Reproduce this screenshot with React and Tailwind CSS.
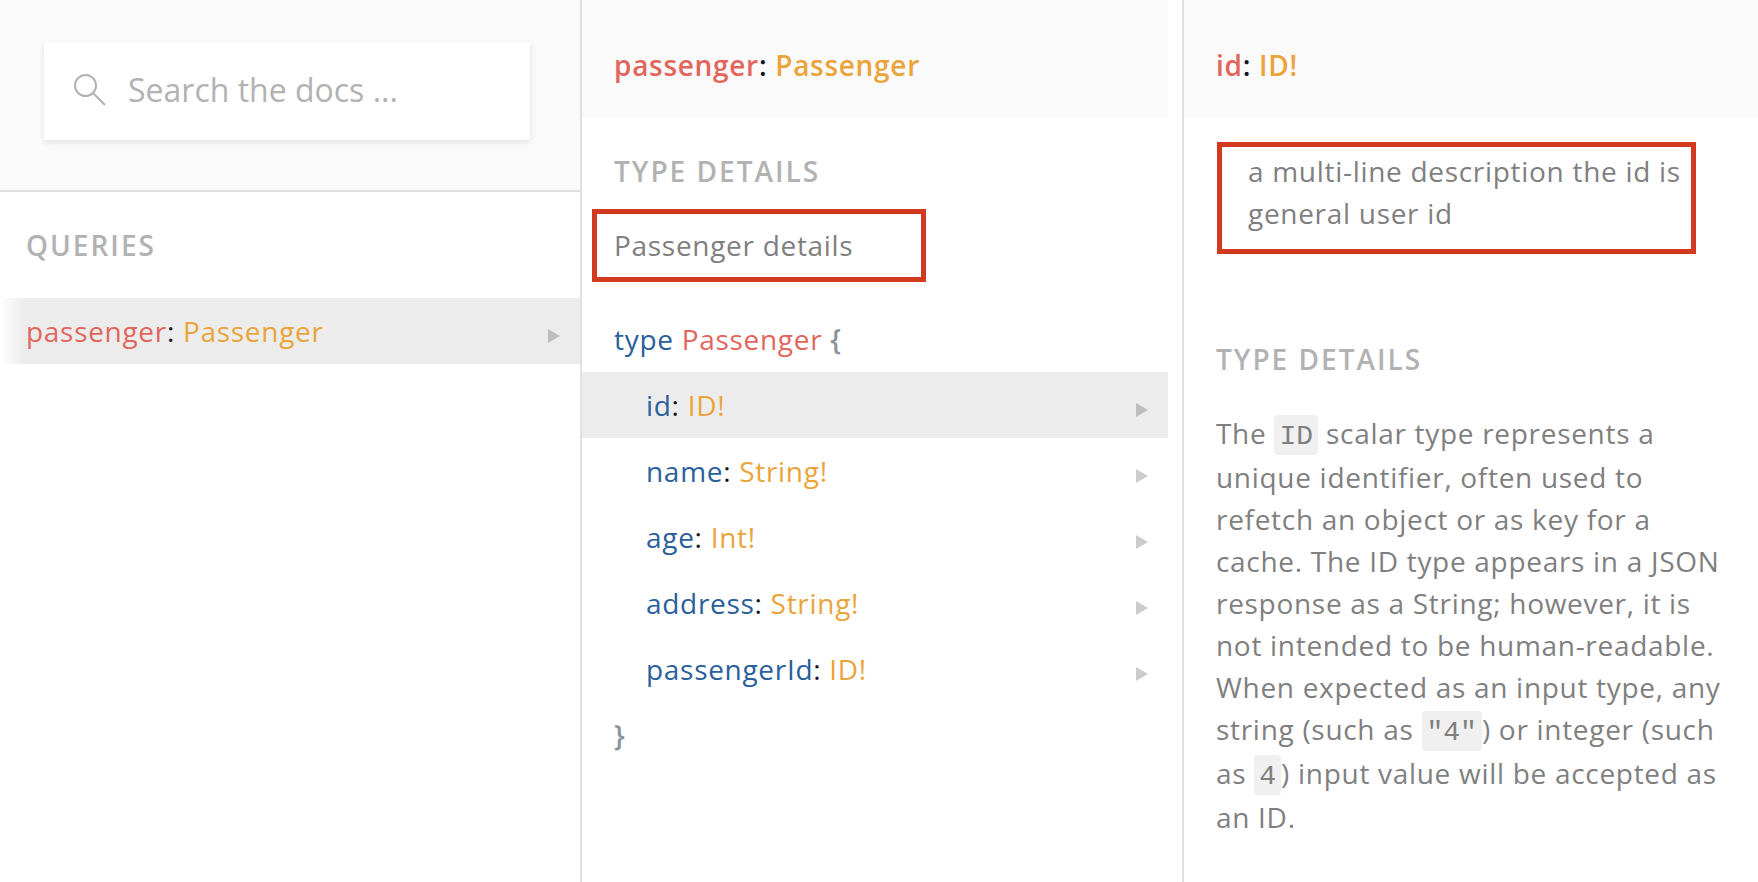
const fields = [
  { name: 'id', type: 'ID!', active: true },
  { name: 'name', type: 'String!' },
  { name: 'age', type: 'Int!' },
  { name: 'address', type: 'String!' },
  { name: 'passengerId', type: 'ID!' },
];

function Arrow({ className }) {
  return (
    <svg className={`mt-2.5 h-[14px] w-3 shrink-0 ${className}`} viewBox="0 0 12 14" fill="currentColor" aria-hidden="true">
      <path d="M0 0L12 7L0 14Z" />
    </svg>
  );
}

function SectionTitle({ children, className = '' }) {
  return (
    <h2 className={`font-semibold tracking-[2px] text-[#b2b2b2] uppercase ${className}`}>{children}</h2>
  );
}

function ColumnHeader({ name, type }) {
  return (
    <header className="bg-[#fafafa] px-8 pt-11 pb-8">
      <h1 className="font-semibold">
        <span className="text-[#e2665d]">{name}</span>: <span className="text-[#eaa439]">{type}</span>
      </h1>
    </header>
  );
}

function Code({ children }) {
  return (
    <code className="mb-px inline-block rounded-[4px] bg-[#f0f0f0] px-[5px] pt-[7px] pb-[3px] font-['Liberation_Mono',monospace] text-[28px] leading-[30px] tracking-normal">
      {children}
    </code>
  );
}

export default function App() {
  return (
    <main className="grid min-h-screen grid-cols-[580fr_602fr_576fr] bg-white font-['Open_Sans',sans-serif] text-[28px] leading-[42px] tracking-wide text-[#10141f]">
      <section className="min-w-0">
        <div className="border-b-2 border-[#e0e0e0] bg-[#fafafa] pt-[42px] pr-[50px] pb-[50px] pl-11">
          <label className="flex h-[98px] items-center gap-[22px] bg-white px-[30px] pb-0.5 shadow-[0_2px_6px_rgba(0,0,0,0.1)]">
            <svg className="size-8 shrink-0" viewBox="0 0 32 32" fill="none" stroke="#b2b2b2" strokeWidth="2" aria-hidden="true">
              <circle cx="11.5" cy="11.5" r="10.5" />
              <path d="M19 19L31 31" />
            </svg>
            <input
              type="text"
              aria-label="Search the docs"
              placeholder="Search the docs ..."
              className="w-full min-w-0 text-[32px] tracking-normal outline-none placeholder:text-[#b2b2b2]"
            />
          </label>
        </div>
        <SectionTitle className="px-[26px] py-8">Queries</SectionTitle>
        <button
          type="button"
          className="flex w-full items-center justify-between bg-linear-to-r from-white to-[#ececec] to-[24px] py-3 pr-5 pl-[26px] text-left"
        >
          <span>
            <span className="text-[#e2665d]">passenger</span>: <span className="text-[#eaa439]">Passenger</span>
          </span>
          <Arrow className="text-[#bdbdbd]" />
        </button>
      </section>

      <section className="min-w-0 border-l-2 border-[#e0e0e0] pr-[14px]">
        <ColumnHeader name="passenger" type="Passenger" />
        <SectionTitle className="px-8 pt-8">Type Details</SectionTitle>
        <div className="mt-[17px] ml-[10px] w-[334px] border-[5px] border-[#d23a20] px-[17px] pt-[10px] pb-[11px] text-[#7f7f7f]">
          <p>Passenger details</p>
        </div>
        <div className="mt-6">
          <p className="px-8 py-3">
            <span className="text-[#2a609c]">type</span> <span className="text-[#e2665d]">Passenger</span>{' '}
            <span className="font-semibold text-[#8b949c]">{'{'}</span>
          </p>
          <ul>
            {fields.map((f) => (
              <li key={f.name}>
                <button
                  type="button"
                  className={`flex w-full items-center justify-between py-3 pr-5 pl-16 text-left ${f.active ? 'bg-[#ececec]' : ''}`}
                >
                  <span>
                    <span className="text-[#2a609c]">{f.name}</span>: <span className="text-[#eaa439]">{f.type}</span>
                  </span>
                  <Arrow className={f.active ? 'text-[#bdbdbd]' : 'text-[#cccccc]'} />
                </button>
              </li>
            ))}
          </ul>
          <p className="px-8 py-3 font-semibold text-[#8b949c]">{'}'}</p>
        </div>
      </section>

      <section className="min-w-0 border-l-2 border-[#e0e0e0]">
        <ColumnHeader name="id" type="ID!" />
        <div className="mt-6 mr-[62px] ml-[33px] border-[5px] border-[#d23a20] pt-[3px] pb-[15px] pl-[26px] text-[#7f7f7f]">
          <p>a multi-line description the id is general user id</p>
        </div>
        <SectionTitle className="mt-[84px] px-8">Type Details</SectionTitle>
        <p className="px-8 pt-8 text-[#7f7f7f]">
          The <Code>ID</Code> scalar type represents a unique identifier, often used to refetch an object or as key for
          a cache. The ID type appears in a JSON response as a String; however, it is not intended to be
          human-readable. When expected as an input type, any string (such as <Code>"4"</Code>) or integer (such as{' '}
          <Code>4</Code>) input value will be accepted as an ID.
        </p>
      </section>
    </main>
  );
}
